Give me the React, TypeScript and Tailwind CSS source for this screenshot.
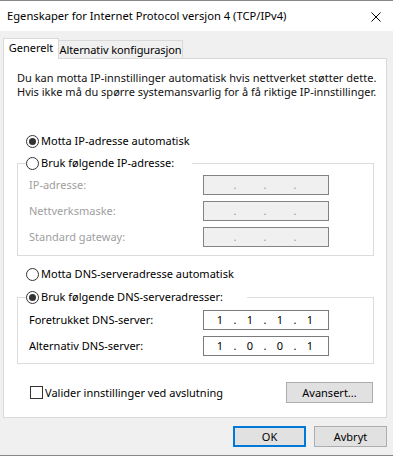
import React from 'react';

function Radio({ checked }: { checked?: boolean }) {
  return (
    <span className="w-[13px] h-[13px] rounded-full border border-[#333] bg-white flex items-center justify-center shrink-0">
      {checked && <span className="w-[7px] h-[7px] rounded-full bg-[#333]" />}
    </span>
  );
}

function IpField({ values, disabled }: { values?: string[]; disabled?: boolean }) {
  const parts = values ?? ['', '', '', ''];
  return (
    <div
      className={`w-[126px] h-[20px] border flex items-center pl-[2px] ${
        disabled ? 'bg-[#f0f0f0] border-[#838383] text-[#9a9a9a]' : 'bg-white border-[#7a7a7a] text-black'
      }`}
    >
      {parts.map((p, i) => (
        <React.Fragment key={i}>
          <span className="w-[28px] text-center">{p}</span>
          {i < 3 && <span className="w-[2px] flex justify-center">.</span>}
        </React.Fragment>
      ))}
    </div>
  );
}

function FieldRow({ label, disabled, values }: { label: string; disabled?: boolean; values?: string[] }) {
  return (
    <div className="flex items-center h-[20px] pl-[3px]">
      <span className={`w-[174px] ${disabled ? 'text-[#a0a0a0]' : 'text-black'}`}>{label}</span>
      <IpField disabled={disabled} values={values} />
    </div>
  );
}

export default function App() {
  return (
    <div className="w-[403px] h-[458px] bg-white flex font-['Noto_Sans',sans-serif] text-[11px] leading-[14px] text-black whitespace-nowrap">
      <div className="w-[393px] h-[456px] flex flex-col border-t border-b border-[#888] bg-[#f0f0f0]">
        {/* title bar */}
        <div className="h-[30px] bg-white flex items-center justify-between pl-[7px] pr-[12px] shrink-0">
          <span className="text-[11.2px]">Egenskaper for Internet Protocol versjon 4 (TCP/IPv4)</span>
          <svg width="10" height="10" viewBox="0 0 10 10" className="mt-[1px]">
            <path d="M0.5 0.5 L9.5 9.5 M9.5 0.5 L0.5 9.5" stroke="#000" strokeWidth="1" />
          </svg>
        </div>

        {/* tabs */}
        <div className="flex items-end pl-[3px] mt-[7px]">
          <div className="relative z-10 -mb-px w-[56px] h-[21px] bg-white border border-b-0 border-[#d9d9d9] flex items-center justify-center pb-[2px]">
            Generelt
          </div>
          <div className="w-[124px] h-[18px] border border-l-0 border-b-0 border-[#d9d9d9] flex items-center justify-center tracking-[-0.1px]">
            Alternativ konfigurasjon
          </div>
        </div>

        {/* panel */}
        <div className="ml-[3px] w-[384px] h-[360px] shrink-0 bg-white border border-[#d9d9d9] flex flex-col">
          <p className="mt-[12px] pl-[13px] leading-[14px] text-[#111]">
            Du kan motta IP-innstillinger automatisk hvis nettverket støtter dette.
            <br />
            Hvis ikke må du spørre systemansvarlig for å få riktige IP-innstillinger.
          </p>

          <label className="mt-[35px] ml-[22px] h-[14px] flex items-center gap-[2px]">
            <Radio checked />
            <span>Motta IP-adresse automatisk</span>
          </label>

          <fieldset className="mt-[8px] ml-[13px] w-[357px] border border-[#dcdcdc] pl-[8px] pt-[5px] pb-[8px]">
            <legend className="h-[14px] flex items-center gap-[2px] pr-[18px] bg-white">
              <Radio />
              <span>Bruk følgende IP-adresse:</span>
            </legend>
            <div className="flex flex-col gap-[6px]">
              <FieldRow label="IP-adresse:" disabled />
              <FieldRow label="Nettverksmaske:" disabled />
              <FieldRow label="Standard gateway:" disabled />
            </div>
          </fieldset>

          <label className="mt-[11px] ml-[22px] h-[14px] flex items-center gap-[2px]">
            <Radio />
            <span>Motta DNS-serveradresse automatisk</span>
          </label>

          <fieldset className="mt-[9px] ml-[13px] w-[357px] border border-[#dcdcdc] pl-[8px] pt-[6px] pb-[7px]">
            <legend className="h-[14px] flex items-center gap-[2px] pr-[24px] bg-white">
              <Radio checked />
              <span>Bruk følgende DNS-serveradresser:</span>
            </legend>
            <div className="flex flex-col gap-[6px]">
              <FieldRow label="Foretrukket DNS-server:" values={['1', '1', '1', '1']} />
              <FieldRow label="Alternativ DNS-server:" values={['1', '0', '0', '1']} />
            </div>
          </fieldset>

          <div className="mt-[18px] flex items-center justify-between pl-[26px] pr-[13px]">
            <label className="flex items-center gap-[2px]">
              <span className="w-[13px] h-[13px] border border-[#333] bg-white shrink-0" />
              <span>Valider innstillinger ved avslutning</span>
            </label>
            <button className="w-[87px] h-[21px] bg-[#e1e1e1] border border-[#adadad] flex items-center justify-center">
              Avansert...
            </button>
          </div>
        </div>

        {/* buttons */}
        <div className="mt-[8px] flex justify-end gap-[8px] pr-[6px]">
          <button className="w-[73px] h-[21px] bg-[#e1e1e1] border-2 border-[#0078d7] flex items-center justify-center">
            OK
          </button>
          <button className="w-[73px] h-[21px] bg-[#e1e1e1] border border-[#adadad] flex items-center justify-center">
            Avbryt
          </button>
        </div>
      </div>
    </div>
  );
}
